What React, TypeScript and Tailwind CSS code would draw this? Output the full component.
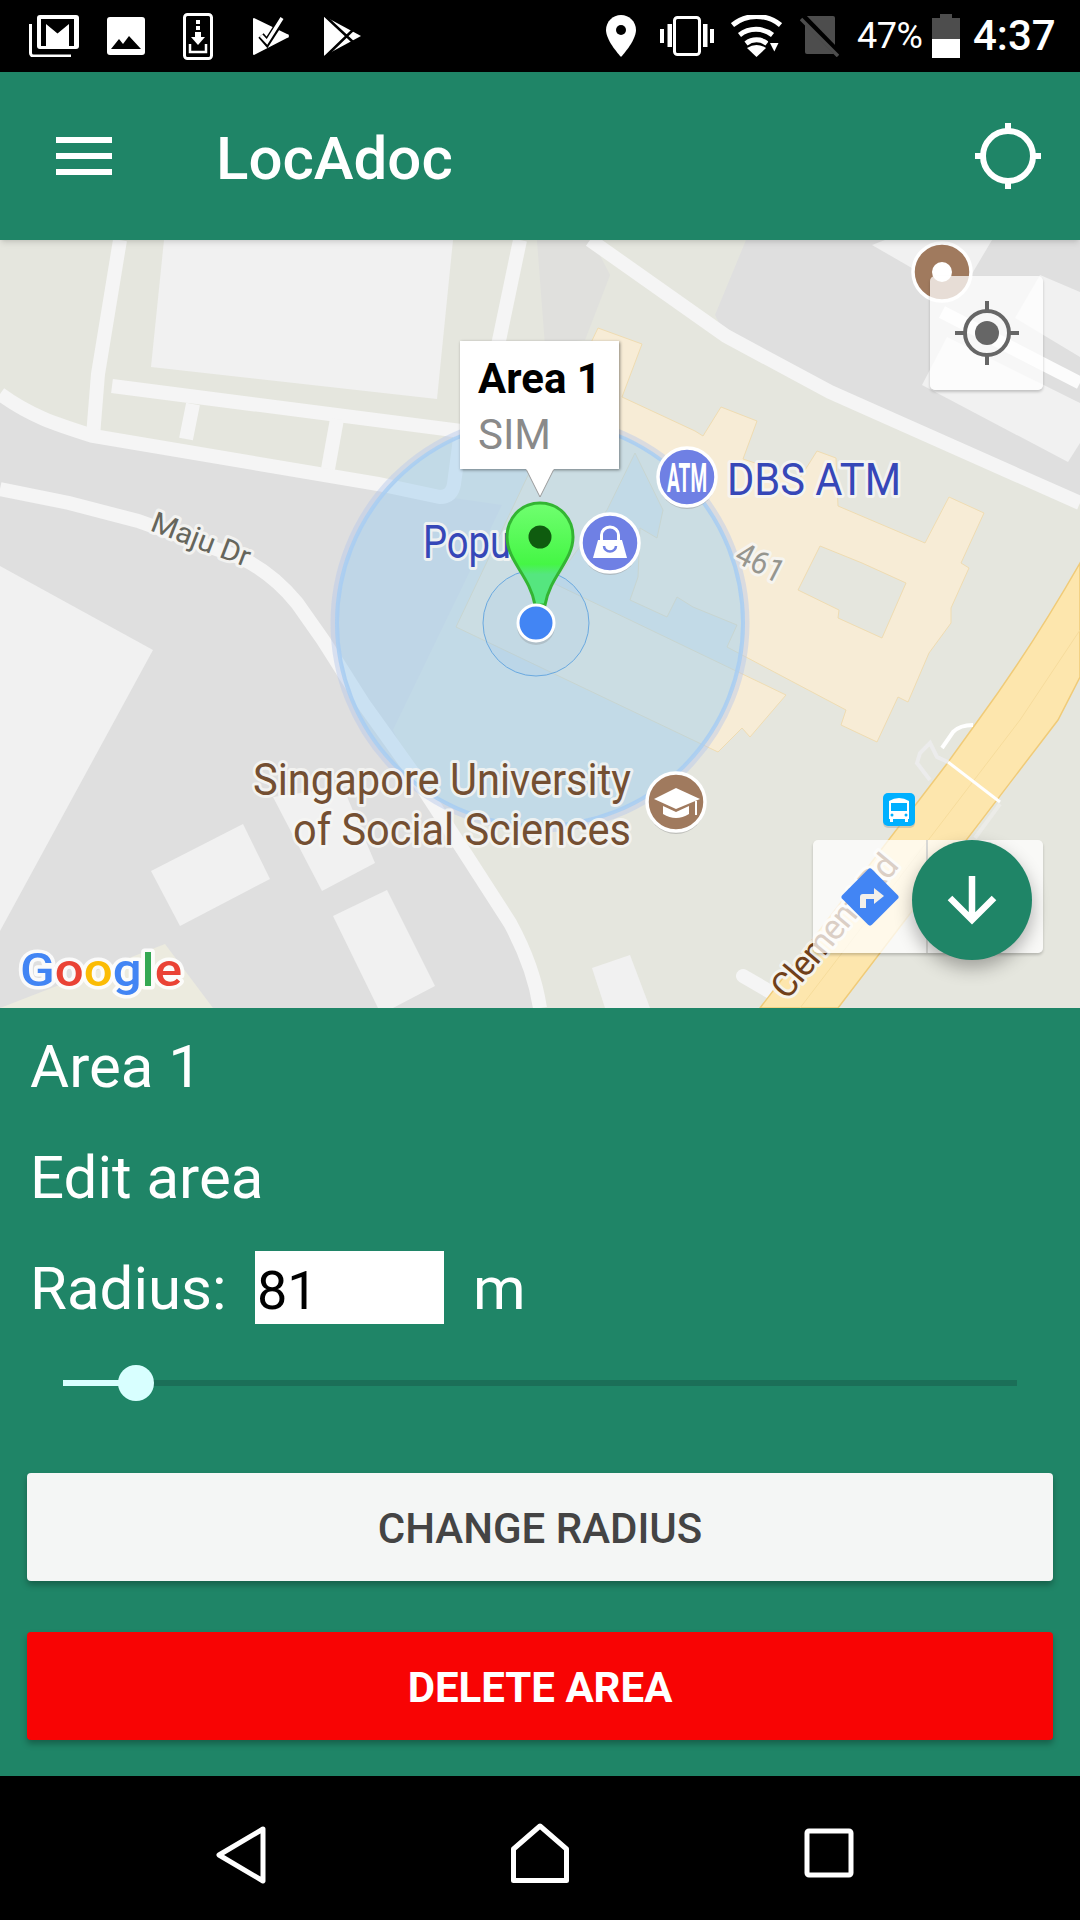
const roadClass = 'fill-none stroke-[#f5f5f5]';
const labelFont = { fontFamily: 'Roboto, sans-serif' };

const GmailIcon = () => (
  <svg width="50" height="42" viewBox="0 0 50 42">
    <path d="M1.500 9V38a3 3 0 0 0 3 3H42" fill="none" stroke="#fff" strokeWidth="3" />
    <rect x="8" y="0" width="42" height="34" rx="3" fill="#fff" />
    <rect x="12" y="4" width="33" height="27" fill="#000" />
    <path d="M17 9L28.500 18.500L40 9V31H17Z" fill="#fff" />
  </svg>
);

const ImageIcon = () => (
  <svg width="38" height="38" viewBox="0 0 38 38">
    <rect width="38" height="38" rx="3" fill="#fff" />
    <path d="M4 32L12 22L16 27L22 19L34 32Z" fill="#000" />
  </svg>
);

const DownloadPhoneIcon = () => (
  <svg width="30" height="47" viewBox="0 0 30 47">
    <rect x="1.500" y="1.500" width="27" height="44" rx="3" fill="none" stroke="#fff" strokeWidth="3" />
    <path d="M13 7h4v4h-4zM13 13h4v4h-4z" fill="#fff" />
    <path d="M12 19h6v5h4l-7 8l-7-8h4z" fill="#fff" />
    <path d="M7 31v8h16v-8" fill="none" stroke="#fff" strokeWidth="2.500" />
  </svg>
);

const PlayCheckIcon = () => (
  <svg width="36" height="38" viewBox="0 0 36 38">
    <path d="M1 1L34 17a2 2 0 0 1 0 4L1 38a1 1 0 0 1-1-1V2a1 1 0 0 1 1-1Z" fill="#fff" />
    <path d="M8 18.500L14 25.500L29 2" fill="none" stroke="#000" strokeWidth="7" />
    <path d="M8 18.500L14 25L29 1" fill="none" stroke="#fff" strokeWidth="3.500" />
  </svg>
);

const PlayStoreIcon = () => (
  <svg width="39" height="42" viewBox="0 0 39 42">
    <path d="M1 1L38 21L1 41Z" fill="#fff" />
    <path d="M1 0L30 27M2 42L31 14" fill="none" stroke="#000" strokeWidth="2.500" />
  </svg>
);

const PinIcon = () => (
  <svg width="30" height="42" viewBox="0 0 30 42">
    <path d="M15 0C6.700 0 0 6.700 0 15C0 26 15 42 15 42S30 26 30 15C30 6.700 23.300 0 15 0Z" fill="#fff" />
    <circle cx="15" cy="15" r="5" fill="#000" />
  </svg>
);

const VibrateIcon = () => (
  <svg width="54" height="40" viewBox="0 0 54 40">
    <rect x="14.500" y="1.500" width="25" height="37" rx="3" fill="none" stroke="#fff" strokeWidth="3" />
    <path d="M0 13h4v14H0zM7.500 8h4.500v23H7.500zM43 8h4.500v23H43zM50 13h4v14h-4z" fill="#fff" />
  </svg>
);

const WifiIcon = () => (
  <svg width="51" height="42" viewBox="0 0 51 42">
    <g fill="none" stroke="#fff" strokeWidth="5">
      <path d="M1.500 10A38 38 0 0 1 49.500 10" />
      <path d="M8.500 20A27 27 0 0 1 41.500 20" />
      <path d="M15 28.500A17 17 0 0 1 36 28.500" />
    </g>
    <path d="M25.500 42L16 33Q25.500 27 35 33Z" fill="#fff" />
    <path d="M39 27h9l-4.500 9z" fill="#000" stroke="#000" strokeWidth="3" />
    <path d="M39 28h8.500l-4.200 8.500z" fill="#fff" />
  </svg>
);

const SimOffIcon = () => (
  <svg width="39" height="42" viewBox="0 0 39 42">
    <path d="M7 1H33a2 2 0 0 1 2 2V39H7a2 2 0 0 1-2-2V3a2 2 0 0 1 2-2Z" fill="#4d4d4d" />
    <path d="M3 2L38 38" stroke="#000" strokeWidth="7" />
    <path d="M1 4L38 41" stroke="#4d4d4d" strokeWidth="3.500" />
  </svg>
);

const BatteryIcon = () => (
  <svg width="28" height="44" viewBox="0 0 28 44">
    <path d="M8 0h12v4h8v21H0V4h8z" fill="#4d4d4d" />
    <rect y="25" width="28" height="19" fill="#fff" />
  </svg>
);

const MapArt = () => (
  <svg className="absolute inset-0 w-full h-full" viewBox="0 240 1080 768">
    <defs>
      <linearGradient id="pinFill" x1="0" y1="0" x2="0" y2="1">
        <stop offset="0" stopColor="#70ff70" />
        <stop offset="0.6" stopColor="#45f645" />
        <stop offset="0.7" stopColor="#55e67f" />
        <stop offset="1" stopColor="#55e67f" />
      </linearGradient>
    </defs>
    <rect x="0" y="240" width="1080" height="768" fill="#e5e6de" />

    {/* grey blocks */}
    <path d="M0 394L52 424L93 436L378 484L447 497L502 505L393 730L413 773L463 850L510 923L533 973L540 1008H0Z" fill="#dfdfdf" />
    <path d="M746 240L715 315L726 336L830 392L1080 503V240Z" fill="#dfdfdf" />
    <path d="M537 240H592L610 275L585 340L545 345Z" fill="#e0e0dd" />

    {/* pale buildings */}
    <g fill="#f1f1f1">
      <path d="M164 240H453L437 399L151 367Z" />
      <path d="M0 566L153 650L0 931Z" />
      <path d="M151 871L243 824L270 879L180 926Z" />
      <path d="M273 797L343 787L375 863L322 891Z" />
      <path d="M333 916L387 890L435 986L393 1008H378Z" />
      <path d="M592 968L630 955L650 1008H605Z" />
      <path d="M922 385L947 337L1080 403V443L1068 462Z" />
      <path d="M1040 275L1080 292V357L1015 318Z" />
      <path d="M872 245L885 240H992L973 272L950 290Z" />
    </g>
    <path d="M0 1008L165 944L213 1008Z" fill="#ecebdf" />

    {/* roads */}
    <g className={roadClass} strokeWidth="14">
      <path d="M120 240L98 374L93 436" />
      <path d="M0 394C30 416 55 424 93 436L378 484L440 497Q452 497 454 484L461 431" />
      <path d="M112 386L461 431" />
      <path d="M193 404L186 439" />
      <path d="M337 419L328 469" />
      <path d="M520 240L496 355" />
      <path d="M590 240L726 336L830 392L1080 503" />
      <path d="M0 489L69 503L138 521L241 558C262 568 280 582 297 603L323 640L363 703L413 773L463 850L510 923C522 945 535 975 540 1008" />
      <path d="M743 976L774 994" strokeLinecap="round" />
    </g>
    <path d="M942 312L1080 383" fill="none" stroke="#fcfcfc" strokeWidth="13" />

    {/* campus building */}
    <path
      d="M598 328L642 344L622 397L695 431L703 436L721 407L757 421L743 459L800 478L817 451L836 458L838 506L925 543L949 497L984 513L961 563L969 568L951 608L951 623L929 653L908 702L898 697L877 742L841 725L846 710L727 647L737 625L693 607L677 597L667 617L630 600L638 577L640 528L657 538L663 510L635 453L607 510L553 583L786 695L750 737L742 728L718 752L456 627Z"
      fill="#f7ecd6"
      stroke="#efdcb2"
      strokeWidth="1"
    />
    <path d="M798 590L820 546L862 563L906 583L882 638L838 618L839 610Z" fill="#e5e6de" stroke="#efdcb2" strokeWidth="1" />

    {/* Clementi Rd */}
    <path d="M760 1008L946 765L977 722Q1030 650 1080 563V677L1058 720L838 1008Z" fill="#fde6ad" stroke="#f0cb78" strokeWidth="1.500" />
    <path d="M800 1008L1020 720L1080 630" fill="none" stroke="#f6dc9c" strokeWidth="1" />
    <path d="M948 762L1000 802" fill="none" stroke="#fff" strokeWidth="3" />
    <path d="M942 748L953 732Q960 725 973 725" fill="none" stroke="#fff" strokeWidth="4" />
    <path d="M948 762L937 757L930 743L920 753L917 763L930 780" fill="none" stroke="#ececec" strokeWidth="4" />
    <path d="M1000 804L975 838" fill="none" stroke="#ecece8" strokeWidth="4" />

    {/* area circle */}
    <circle cx="540" cy="623" r="207" fill="none" stroke="#b5c8ea" strokeOpacity="0.45" strokeWidth="5" />
    <circle cx="540" cy="623" r="203" fill="#a0cdf0" fillOpacity="0.5" stroke="#a8cdf2" strokeOpacity="0.9" strokeWidth="4" />

    {/* labels */}
    <g style={labelFont} paintOrder="stroke" stroke="#f6f6f4" strokeOpacity="0.85" strokeWidth="6" strokeLinejoin="round">
      <text x="149" y="530" fontSize="29" fill="#66665c" transform="rotate(21 149 530)" textLength="104" lengthAdjust="spacingAndGlyphs">Maju Dr</text>
      <text x="423" y="558" fontSize="46" fill="#3647b8" textLength="88" lengthAdjust="spacingAndGlyphs">Popu</text>
      <text x="727" y="495" fontSize="45" fill="#3647b8" textLength="174" lengthAdjust="spacingAndGlyphs">DBS ATM</text>
      <text x="253" y="795" fontSize="45" fill="#744f32" textLength="378" lengthAdjust="spacingAndGlyphs">Singapore University</text>
      <text x="293" y="845" fontSize="45" fill="#744f32" textLength="338" lengthAdjust="spacingAndGlyphs">of Social Sciences</text>
      <text x="733" y="561" fontSize="32" fill="#96968f" transform="rotate(27 733 561)" textLength="50" lengthAdjust="spacingAndGlyphs">461</text>
      <text x="787" y="1001" fontSize="35" fill="#70401a" transform="rotate(-50 787 1001)" textLength="176">Clementi Rd</text>
    </g>

    {/* pois */}
    <g stroke="#fff" strokeWidth="3.500">
      <circle cx="687" cy="480" r="29" fill="#9a9a9a" stroke="none" fillOpacity="0.5" />
      <circle cx="687" cy="477" r="29" fill="#6f80e4" />
      <circle cx="610" cy="546" r="29" fill="#9a9a9a" stroke="none" fillOpacity="0.5" />
      <circle cx="610" cy="543" r="29" fill="#6f80e4" />
      <circle cx="676" cy="805" r="29" fill="#9a9a9a" stroke="none" fillOpacity="0.5" />
      <circle cx="676" cy="802" r="29" fill="#a07a5e" />
      <circle cx="942" cy="272" r="29" fill="#a07a5e" />
    </g>
    <circle cx="942" cy="272" r="10" fill="#fff" />
    <text x="667" y="492" fontSize="40" fontWeight="700" fill="#fff" style={labelFont} textLength="40" lengthAdjust="spacingAndGlyphs">ATM</text>
    <path d="M598 540H622L627 558H593Z" fill="#fff" />
    <path d="M601.500 540V535a8.500 8 0 0 1 17 0V540" fill="none" stroke="#fff" strokeWidth="3" />
    <path d="M604 546a6 5.500 0 0 0 12 0" fill="none" stroke="#6f80e4" strokeWidth="2.500" />
    <path d="M676 788L700 799L676 809L654 799Z" fill="#fff" />
    <path d="M663 806V814Q676 822 689 814V806L676 812Z" fill="#fff" />
    <path d="M696 801V815" stroke="#fff" strokeWidth="2" />

    {/* bus stop */}
    <rect x="883" y="794" width="32" height="34" rx="5" fill="#9a9a9a" fillOpacity="0.4" />
    <rect x="883" y="793" width="32" height="33" rx="5" fill="#00b0ff" />
    <path d="M889 801Q899 795 909 801V819H889Z" fill="#fff" />
    <rect x="891" y="803" width="16" height="8" fill="#00b0ff" />
    <circle cx="892" cy="815" r="1.500" fill="#00b0ff" />
    <circle cx="906" cy="815" r="1.500" fill="#00b0ff" />
    <path d="M890 819h3v3h-3zM905 819h3v3h-3z" fill="#fff" />

    {/* google */}
    <text x="20" y="986" fontSize="47" fontWeight="500" style={labelFont} paintOrder="stroke" stroke="#fff" strokeOpacity="0.85" strokeWidth="7" strokeLinejoin="round" textLength="162" lengthAdjust="spacingAndGlyphs">
      <tspan fill="#4285f4">G</tspan>
      <tspan fill="#ea4335">o</tspan>
      <tspan fill="#fbbc05">o</tspan>
      <tspan fill="#4285f4">g</tspan>
      <tspan fill="#34a853">l</tspan>
      <tspan fill="#ea4335">e</tspan>
    </text>

    {/* accuracy, dot and pin */}
    <circle cx="536" cy="623" r="53" fill="#8fc0ec" fillOpacity="0.12" stroke="#6aa9e0" strokeWidth="1" />
    <path d="M540 503C520 503 507 519 507 537C507 561 530 576 535 605H545C550 576 573 561 573 537C573 519 560 503 540 503Z" fill="url(#pinFill)" stroke="#33b533" strokeWidth="3" />
    <circle cx="540" cy="537" r="11.500" fill="#0f5c0f" />
    <circle cx="536" cy="626" r="19" fill="#777" fillOpacity="0.25" />
    <circle cx="536" cy="623" r="18" fill="#4285f4" stroke="#fff" strokeWidth="3" />
  </svg>
);

const App = () => {
  return (
    <div className="w-[1080px] h-[1920px] flex flex-col bg-black overflow-hidden font-['Roboto',sans-serif]">
      {/* status bar */}
      <div className="h-[72px] shrink-0 flex items-center bg-black text-white">
        <div className="ml-[29px]"><GmailIcon /></div>
        <div className="ml-[28px]"><ImageIcon /></div>
        <div className="ml-[38px]"><DownloadPhoneIcon /></div>
        <div className="ml-[40px]"><PlayCheckIcon /></div>
        <div className="ml-[34px]"><PlayStoreIcon /></div>
        <div className="ml-[244px]"><PinIcon /></div>
        <div className="ml-[24px]"><VibrateIcon /></div>
        <div className="ml-[17px]"><WifiIcon /></div>
        <div className="ml-[18px]"><SimOffIcon /></div>
        <span className="ml-[18px] w-[66px] text-[36px] leading-none tracking-[-0.5px] whitespace-nowrap">47%</span>
        <div className="ml-[9px]"><BatteryIcon /></div>
        <span className="ml-[13px] text-[42px] leading-none font-medium whitespace-nowrap">4:37</span>
      </div>

      {/* app bar */}
      <div className="relative z-10 h-[168px] shrink-0 flex items-center bg-[#1f8567] shadow-md text-white">
        <div className="ml-[56px] w-[56px] flex flex-col gap-[10px]">
          <div className="h-[6px] bg-white" />
          <div className="h-[6px] bg-white" />
          <div className="h-[6px] bg-white" />
        </div>
        <h1 className="ml-[104px] mt-[5px] text-[60px] font-medium leading-none">LocAdoc</h1>
        <svg className="ml-auto mr-[39px]" width="66" height="66" viewBox="0 0 66 66">
          <circle cx="33" cy="33" r="25" fill="none" stroke="#fff" strokeWidth="6" />
          <path d="M33 0V10M33 56V66M0 33H10M56 33H66" stroke="#fff" strokeWidth="6" />
        </svg>
      </div>

      {/* map */}
      <div className="relative h-[768px] shrink-0 overflow-hidden">
        <MapArt />

        <div className="absolute left-[460px] top-[101px] w-[159px] h-[128px] bg-white pt-[10px] pl-[18px] shadow-[1px_1px_3px_rgba(0,0,0,0.45)]">
          <div className="text-[42px] font-bold leading-[56px] text-black">Area 1</div>
          <div className="text-[42px] leading-[56px] text-[#8a8a8a]">SIM</div>
        </div>
        <svg className="absolute left-[525px] top-[228px]" width="30" height="30" viewBox="0 0 30 30">
          <path d="M1 1L15 29L29 1" fill="#fff" stroke="#9a9a9a" strokeWidth="1" />
          <rect x="1.500" y="0" width="27" height="2" fill="#fff" />
        </svg>

        {/* my location button */}
        <div className="absolute left-[930px] top-[36px] w-[113px] h-[114px] rounded-[5px] bg-white/75 shadow-[0_2px_3px_rgba(0,0,0,0.2)] flex items-center justify-center">
          <svg width="64" height="64" viewBox="0 0 64 64">
            <circle cx="32" cy="32" r="22" fill="none" stroke="#666" strokeWidth="4" />
            <circle cx="32" cy="32" r="12" fill="#666" />
            <path d="M32 0V10M32 54V64M0 32H10M54 32H64" stroke="#666" strokeWidth="4" />
          </svg>
        </div>

        {/* navigation toolbar */}
        <div className="absolute left-[813px] top-[600px] w-[230px] h-[113px] flex rounded-[5px] bg-white/75 shadow-[0_2px_3px_rgba(0,0,0,0.2)]">
          <div className="w-[115px] border-r-2 border-[#d9d9d6] flex items-center justify-center">
            <svg width="60" height="60" viewBox="0 0 60 60">
              <rect x="9" y="9" width="42" height="42" rx="3" fill="#4285f4" transform="rotate(45 30 30)" />
              <path d="M20 41V30Q20 27 23 27H34V21L44 29L34 37V32H26V41Z" fill="#f3f0ea" />
            </svg>
          </div>
        </div>

        <button className="absolute left-[912px] top-[600px] w-[120px] h-[120px] rounded-full bg-[#1f8567] shadow-[0_8px_18px_rgba(0,0,0,0.3)] flex items-center justify-center">
          <svg width="52" height="52" viewBox="0 0 52 52">
            <path d="M26 2V46M4 24L26 46L48 24" fill="none" stroke="#fff" strokeWidth="6.500" />
          </svg>
        </button>
      </div>

      {/* panel */}
      <div className="flex-1 flex flex-col bg-[#1f8567] text-white text-[60px] pt-[3px]">
        <div className="h-[111px] leading-[111px] pl-[30px]">Area 1</div>
        <div className="h-[111px] leading-[111px] pl-[30px]">Edit area</div>
        <div className="h-[111px] leading-[111px] pl-[30px] flex items-center">
          <span className="w-[225px]">Radius:</span>
          <input
            readOnly
            value="81"
            className="w-[189px] h-[73px] mb-[2px] pt-[6px] pl-[2px] bg-white text-black text-[54px] outline-none"
          />
          <span className="ml-[29px]">m</span>
        </div>

        <div className="h-[78px] flex items-center px-[63px]">
          <div className="relative w-full h-[6px] bg-[#1b6f58]">
            <div className="h-full w-[73px] bg-[#d8ffff]" />
            <div className="absolute left-[55px] -top-[15px] w-[36px] h-[36px] rounded-full bg-[#d8ffff]" />
          </div>
        </div>

        <button className="mt-[51px] mx-[27px] h-[108px] pt-[2px] rounded-[4px] bg-[#f4f6f5] text-[#444] text-[42px] font-medium shadow-[0_4px_6px_rgba(0,0,0,0.28)]">
          CHANGE RADIUS
        </button>
        <button className="mt-[51px] mx-[27px] h-[108px] pt-[2px] rounded-[4px] bg-[#f80404] text-white text-[42px] font-bold shadow-[0_4px_6px_rgba(0,0,0,0.28)]">
          DELETE AREA
        </button>
      </div>

      {/* nav bar */}
      <div className="h-[144px] shrink-0 bg-black flex items-center">
        <svg className="ml-[214px] mt-[14px]" width="54" height="60" viewBox="0 0 54 60">
          <path d="M49 4L5 30L49 56Z" fill="none" stroke="#fff" strokeWidth="5" strokeLinejoin="round" />
        </svg>
        <svg className="ml-[243px] mt-[10px]" width="58" height="60" viewBox="0 0 58 60">
          <path d="M29 3L55.500 26V57.500H2.500V26Z" fill="none" stroke="#fff" strokeWidth="5" strokeLinejoin="round" />
        </svg>
        <svg className="ml-[235px] mt-[10px]" width="50" height="50" viewBox="0 0 50 50">
          <rect x="3" y="3" width="44" height="44" rx="2" fill="none" stroke="#fff" strokeWidth="5" />
        </svg>
      </div>
    </div>
  );
};

export default App;
